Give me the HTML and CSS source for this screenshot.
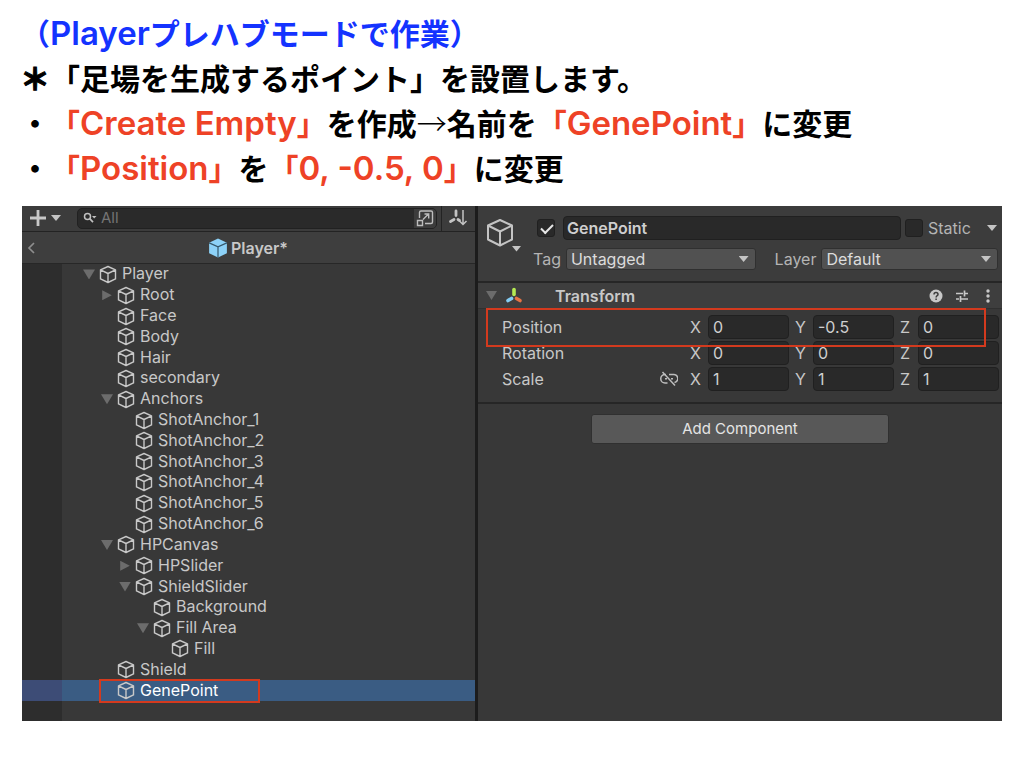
FILE: index.html
```html
<!DOCTYPE html>
<html lang="ja">
<head>
<meta charset="utf-8">
<title>GenePoint</title>
<link rel="stylesheet" href="styles.css">
</head>
<body>
<svg class="defs" aria-hidden="true">
  <symbol id="cube" viewBox="0 0 18 18"><path d="M9 1 16.5 4.3V13.4L9 17 1.5 13.4V4.3ZM1.5 4.3 9 8 16.5 4.3M9 8V17" fill="none" stroke="currentColor" stroke-width="1.4" stroke-linejoin="round"/></symbol>
</svg>
<header class="notes">
  <p class="blue">（<span class="latin">Player</span>プレハブモードで作業）</p>
  <p><span class="star">＊</span>「足場を生成するポイント」を設置します。</p>
  <p>・<em>「<span class="latin">Create Empty</span>」</em>を作成<span class="arrow">→</span>名前を<em>「<span class="latin">GenePoint</span>」</em>に変更</p>
  <p>・<em>「<span class="latin">Position</span>」</em>を<em>「<span class="latin">0, -0.5, 0</span>」</em>に変更</p>
</header>
<main class="editor">
  <section class="hierarchy">
    <div class="toolbar">
      <button class="add" aria-label="Add"><svg width="34" height="18" viewBox="0 0 34 18"><path d="M9 1V17M1 9H17" stroke="#c8c8c8" stroke-width="2.8"/><path d="M22 6H32L27 12Z" fill="#c4c4c4"/></svg></button>
      <div class="search">
        <svg width="14" height="12" viewBox="0 0 14 12"><circle cx="4.5" cy="4.5" r="3" fill="none" stroke="#c0c0c0" stroke-width="1.5"/><path d="M6.7 6.7 10 10.2" stroke="#c0c0c0" stroke-width="1.7"/><path d="M9 4H13.500L11.200 6.500Z" fill="#c0c0c0"/></svg>
        <input type="text" placeholder="All" aria-label="Search">
        <button class="expand" aria-label="Open search"><svg width="18" height="18" viewBox="0 0 18 18" fill="none" stroke="#bdbdbd" stroke-width="1.4"><path d="M3.500 9V3.500Q3.500 2 5 2H15Q16.500 2 16.500 3.500V13Q16.500 14.500 15 14.500H9M1.500 11.500H6.500V16.500H1.500ZM7 10.500 12.500 5M8.500 5H12.700V9.500"/></svg></button>
      </div>
      <button class="sort" aria-label="Sort"><svg width="20" height="18" viewBox="0 0 20 18" fill="none" stroke="#c4c4c4"><path d="M8 2V6.500M6 10.500 2.500 12.500M10 10.500 11.500 11.500" stroke-width="2.800" stroke-linecap="round"/><path d="M15 1V15M11.500 12 15 15.500 18.500 12" stroke-width="1.500"/></svg></button>
    </div>
    <div class="prefab">
      <button class="back" aria-label="Back"><svg width="8" height="12" viewBox="0 0 8 12"><path d="M7 1 2 6 7 11" fill="none" stroke="#8e8e8e" stroke-width="1.700"/></svg></button>
      <h2><svg width="20" height="20" viewBox="0 0 18 18"><path d="M9 .5 17 4.200V13.700L9 17.500 1 13.700V4.200Z" fill="#8dd2f8"/><path d="M1 4.400 9 8 17 4.400M9 8V17.500" fill="none" stroke="#35576b" stroke-width="1.100"/></svg>Player*</h2>
    </div>
    <ul class="tree">
      <li class="d0 open"><svg><use href="#cube"/></svg><span>Player</span></li>
      <li class="d1 closed"><svg><use href="#cube"/></svg><span>Root</span></li>
      <li class="d1"><svg><use href="#cube"/></svg><span>Face</span></li>
      <li class="d1"><svg><use href="#cube"/></svg><span>Body</span></li>
      <li class="d1"><svg><use href="#cube"/></svg><span>Hair</span></li>
      <li class="d1"><svg><use href="#cube"/></svg><span>secondary</span></li>
      <li class="d1 open"><svg><use href="#cube"/></svg><span>Anchors</span></li>
      <li class="d2"><svg><use href="#cube"/></svg><span>ShotAnchor_1</span></li>
      <li class="d2"><svg><use href="#cube"/></svg><span>ShotAnchor_2</span></li>
      <li class="d2"><svg><use href="#cube"/></svg><span>ShotAnchor_3</span></li>
      <li class="d2"><svg><use href="#cube"/></svg><span>ShotAnchor_4</span></li>
      <li class="d2"><svg><use href="#cube"/></svg><span>ShotAnchor_5</span></li>
      <li class="d2"><svg><use href="#cube"/></svg><span>ShotAnchor_6</span></li>
      <li class="d1 open"><svg><use href="#cube"/></svg><span>HPCanvas</span></li>
      <li class="d2 closed"><svg><use href="#cube"/></svg><span>HPSlider</span></li>
      <li class="d2 open"><svg><use href="#cube"/></svg><span>ShieldSlider</span></li>
      <li class="d3"><svg><use href="#cube"/></svg><span>Background</span></li>
      <li class="d3 open"><svg><use href="#cube"/></svg><span>Fill Area</span></li>
      <li class="d4"><svg><use href="#cube"/></svg><span>Fill</span></li>
      <li class="d1"><svg><use href="#cube"/></svg><span>Shield</span></li>
      <li class="d1 selected"><svg><use href="#cube"/></svg><span>GenePoint</span><i class="mark"></i></li>
    </ul>
  </section>
  <section class="inspector">
    <div class="object">
      <svg class="big" width="36" height="36" viewBox="0 0 36 36"><path d="M14 2 26 7.500V21.500L14 27.500 2 21.500V7.500ZM2 7.500 14 13.500 26 7.500M14 13.500V27.500" fill="none" stroke="#c4c4c4" stroke-width="2" stroke-linejoin="round"/><path d="M26 28H35L30.500 33.500Z" fill="#c4c4c4"/></svg>
      <div class="props">
        <div class="line">
          <input type="checkbox" class="check" aria-label="Active" checked>
          <input type="text" class="field name" aria-label="Name" value="GenePoint">
          <input type="checkbox" class="check" id="static">
          <label class="static" for="static">Static</label>
          <button class="caret" aria-label="Static options"></button>
        </div>
        <div class="line">
          <label for="tag">Tag</label>
          <span class="drop tag"><select id="tag"><option>Untagged</option></select></span>
          <label class="layer" for="layer">Layer</label>
          <span class="drop"><select id="layer"><option>Default</option></select></span>
        </div>
      </div>
    </div>
    <div class="component">
      <span class="fold"></span>
      <svg width="18" height="18" viewBox="0 0 18 18" stroke-width="3.600" stroke-linecap="round"><path d="M9 2.500V7.500" stroke="#b5ea53"/><path d="M6.500 11.500 3 13.500" stroke="#83cdf5"/><path d="M11.500 11.500 15 13.500" stroke="#e77345"/></svg>
      <h3>Transform</h3>
      <button aria-label="Help"><svg width="14" height="14" viewBox="0 0 14 14"><circle cx="7" cy="7" r="6.500" fill="#c8c8c8"/><path d="M5 5.500Q5 3.600 7 3.600T9 5.400C9 6.600 7.100 6.700 7.100 8.400M7.100 9.500V11" fill="none" stroke="#3e3e3e" stroke-width="1.500"/></svg></button>
      <button aria-label="Presets"><svg width="14" height="14" viewBox="0 0 14 14"><path d="M1 4.500H8M10 4.500H13M9.500 1.500V7.500M1 10H4M6 10H13M5.500 7V13" fill="none" stroke="#c8c8c8" stroke-width="1.700"/></svg></button>
      <button aria-label="More"><svg width="6" height="14" viewBox="0 0 6 14" fill="#c8c8c8"><circle cx="3" cy="2" r="1.700"/><circle cx="3" cy="7" r="1.700"/><circle cx="3" cy="12" r="1.700"/></svg></button>
    </div>
    <div class="transform">
      <div class="vector"><span class="label">Position</span>
        <label>X<input class="field" value="0"></label><label>Y<input class="field" value="-0.5"></label><label>Z<input class="field" value="0"></label></div>
      <div class="vector"><span class="label">Rotation</span>
        <label>X<input class="field" value="0"></label><label>Y<input class="field" value="0"></label><label>Z<input class="field" value="0"></label></div>
      <div class="vector"><span class="label">Scale</span>
        <svg class="link" width="18" height="16" viewBox="0 0 18 16" fill="none" stroke="#bdbdbd" stroke-width="1.500"><path d="M6 3.500H5A4 4 0 0 0 5 12H7.500M9 3.500H13A4 4 0 0 1 14.500 11.500M5 7.800H7M11 7.800H13M2.500 1 15 14.500"/></svg>
        <label>X<input class="field" value="1"></label><label>Y<input class="field" value="1"></label><label>Z<input class="field" value="1"></label></div>
      <i class="mark"></i>
    </div>
    <button class="addcomp">Add Component</button>
  </section>
</main>
</body>
</html>
```

FILE: styles.css
```css
* { box-sizing: border-box; }
body { margin: 0; padding: 10px 22px 0; background: #fff; }
.defs { position: absolute; width: 0; height: 0; }
button { border: 0; padding: 0; background: none; font: inherit; color: inherit; display: flex; align-items: center; justify-content: center; }
input, select { font: inherit; color: inherit; margin: 0; min-width: 0; }
h2, h3 { margin: 0; font-size: 16px; font-weight: 600; }

.notes { margin: 0 -2px 16px; font: bold 30px/45px "Noto Sans CJK JP", sans-serif; color: #000; text-spacing-trim: space-all; }
.notes p { margin: 0; height: 45px; white-space: nowrap; }
.notes em { font-style: normal; color: #ee4226; }
.notes .blue { color: #1433ff; }
.latin { font: 600 33px/45px Inter, sans-serif; }
.arrow { font-weight: 300; }
.star { font-weight: 900; -webkit-text-stroke: 1px #000; }

.editor { display: grid; grid-template-columns: minmax(0, 453fr) minmax(0, 524fr); gap: 3px; min-height: 515px; background: #1c1c1c; color: #c8c8c8; font: 16px/20px Inter, sans-serif; }
.hierarchy { background: #383838; display: flex; flex-direction: column; }
.toolbar { display: flex; align-items: center; height: 26px; padding-bottom: 1px; background: #3c3c3c; border-bottom: 1px solid #232323; }
.add { width: 34px; margin: 0 14px 0 7px; }
.search { flex: 1; display: flex; align-items: center; height: 21px; padding-left: 5px; background: #2a2a2a; border: 1px solid #212121; border-radius: 5px; overflow: hidden; }
.search input { flex: 1; height: 19px; padding: 0 0 0 4px; border: 0; background: none; font-size: 15px; }
.search input::placeholder { color: #747474; opacity: 1; }
.expand { width: 22px; height: 19px; background: #3c3c3c; }
.sort { width: 34px; height: 25px; padding-right: 2px; margin-left: 4px; border-left: 1px solid #232323; }
.prefab { display: flex; align-items: center; height: 32px; padding-left: 5px; background: #3e3e3e; border-bottom: 1px solid #272727; }
.prefab h2 { flex: 1; display: flex; align-items: center; justify-content: center; gap: 3px; padding-right: 14px; }

.tree { flex: 1; margin: 0; padding: 0 0 20px; list-style: none; display: grid; grid-auto-rows: 1fr; background: linear-gradient(90deg, #2d2d2d 40px, #383838 40px); }
.tree li { position: relative; display: flex; align-items: center; gap: 4px; }
.tree li::before { content: ""; width: 12px; height: 10px; }
.tree svg { width: 18px; height: 19px; }
.tree span { padding: 0 0 2px 1px; line-height: 18px; }
.tree .open::before, .fold { background: #6c6c6c; clip-path: polygon(0 0, 100% 0, 50% 100%); }
.tree .closed::before { background: #6c6c6c; clip-path: polygon(10% 0, 90% 50%, 10% 100%); }
.d0 { padding-left: 61px; }
.d1 { padding-left: 79px; }
.d2 { padding-left: 97px; }
.d3 { padding-left: 115px; }
.d4 { padding-left: 133px; }
.tree .selected { color: #fff; background: linear-gradient(90deg, #3d4c76 40px, #3a5c83 40px); }
.selected svg { color: #c8c8c8; }
.mark { position: absolute; border: 2px solid #d33a1e; pointer-events: none; }
.selected .mark { left: 77px; width: 161px; top: -1px; height: 24px; }

.inspector { background: #383838; }
.object { display: flex; gap: 10px; height: 77px; padding: 11px 4px 0 8px; background: #3c3c3c; border-bottom: 2px solid #262626; }
.big { margin-top: 1px; }
.props { flex: 1; min-width: 0; display: flex; flex-direction: column; gap: 9px; }
.line { display: flex; align-items: center; height: 22px; padding-left: 1px; color: #b4b4b4; }
.check { appearance: none; flex: none; width: 18px; height: 18px; margin: 0 4px; background: #292929; border: 1px solid #202020; border-radius: 3px; }
.check:checked { margin-right: 8px; }
.check:checked::before { content: ""; display: block; width: 10px; height: 5px; margin: 4px 3px; border: solid #e6e6e6; border-width: 0 0 2px 2px; transform: rotate(-45deg); }
.field { height: 24px; padding: 0 3px; background: #292929; border: 1px solid #202020; border-radius: 4px; color: #cfcfcf; }
.name { flex: 1; font-weight: 600; }
.static { flex: none; width: 59px; margin-left: 1px; }
.caret { width: 10px; height: 6px; margin-right: 1px; background: #c4c4c4; clip-path: polygon(0 0, 100% 0, 50% 100%); }
.drop { position: relative; flex: 176; margin-left: 5px; }
.tag { flex: 189; }
.drop select { appearance: none; display: block; width: 100%; height: 22px; padding: 0 4px; background: #515151; border: 1px solid #303030; border-radius: 3px; color: #dcdcdc; }
.drop::after { content: ""; position: absolute; right: 7px; top: 8px; width: 10px; height: 6px; background: #c4c4c4; clip-path: polygon(0 0, 100% 0, 50% 100%); }
.layer { margin-left: 19px; }

.component { display: flex; align-items: center; height: 26px; padding: 0 11px 0 8px; background: #3e3e3e; border-bottom: 1px solid #303030; }
.fold { width: 11px; height: 9px; margin-right: 8px; }
.component h3 { flex: 1; margin-left: 32px; }
.component button { margin-left: 12px; }
.component button:last-child { margin-left: 16px; }
.transform { position: relative; display: flex; flex-direction: column; gap: 2px; padding: 6px 3px 11px 24px; border-bottom: 2px solid #262626; }
.vector { display: flex; align-items: center; gap: 6px; }
.label { flex: 1; }
.vector label { display: flex; align-items: center; width: 99px; }
.vector .field { width: 81px; margin-left: auto; padding: 0 4px; }
.link { margin-right: 6px; }
.transform .mark { left: 8px; right: 16px; top: -1px; height: 39px; }
.addcomp { width: 57%; height: 30px; margin: 10px auto 0; background: #585858; border: 1px solid #303030; border-radius: 3px; color: #e4e4e4; font-size: 15px; }
```
